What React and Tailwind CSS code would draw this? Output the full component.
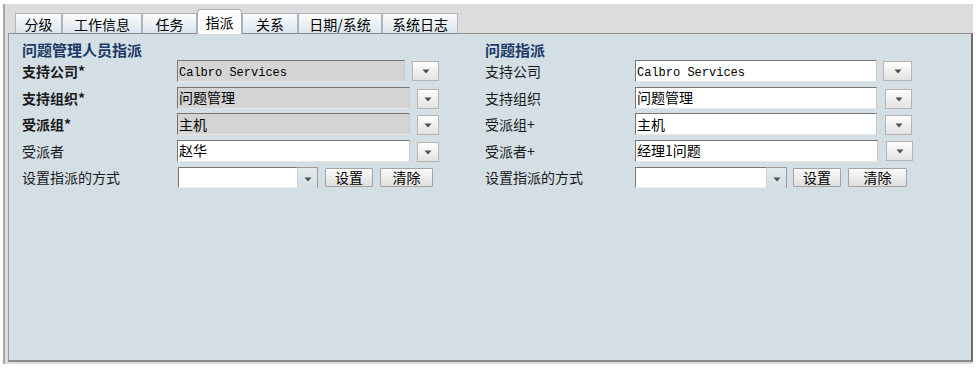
import React from "react";

function Tri() {
  return (
    <svg width="8" height="5" viewBox="0 0 8 5">
      <path d="M0.5 0.5H7.5L4 4.5Z" fill="#4d4d4d" />
    </svg>
  );
}

function DropBtn({ className }) {
  return (
    <div
      className={
        "flex items-end justify-center pb-[6px] border border-[#b4b4b4] bg-gradient-to-b from-[#fefefe] to-[#e2e2e2] " +
        className
      }
    >
      <Tri />
    </div>
  );
}

function Field({ className, gray, mono, children }) {
  return (
    <div
      className={
        "flex items-center pl-[1px] border border-t-[#767676] border-l-[#767676] border-r-[#c9c9c9] border-b-[#e6e6e6] text-black overflow-hidden whitespace-nowrap " +
        (gray ? "bg-[#d4d4d4] " : "bg-white ") +
        (mono
          ? "font-['Liberation_Mono',monospace] text-[12px] pt-[3px] "
          : "font-['Noto_Sans_CJK_SC',sans-serif] text-[14px] ") +
        className
      }
    >
      {children}
    </div>
  );
}

function Btn({ className, children }) {
  return (
    <div
      className={
        "flex items-center justify-center border border-[#a3a3a3] bg-gradient-to-b from-[#fbfbfb] to-[#dedede] text-[14px] text-black font-['Noto_Sans_CJK_SC',sans-serif] leading-none rounded-[1px] " +
        className
      }
    >
      {children}
    </div>
  );
}

function Select({ className }) {
  return (
    <div className={"flex h-[21px] " + className}>
      <div className="flex-1 bg-white border border-t-[#767676] border-l-[#767676] border-r-[#d0d0d0] border-b-[#ededed]" />
      <div className="w-[20px] flex items-end justify-center pb-[6px] border-t border-r border-t-[#9a9a9a] border-r-[#9a9a9a] bg-gradient-to-b from-[#e4eaee] to-[#d3dde3]">
        <Tri />
      </div>
    </div>
  );
}

function Label({ className, bold, children }) {
  return (
    <div
      className={
        "shrink-0 text-[14px] leading-none text-[#1a1a1a] font-['Noto_Sans_CJK_SC',sans-serif] whitespace-nowrap " +
        (bold ? "font-bold " : "") +
        className
      }
    >
      {children}
    </div>
  );
}

const tabs = [
  { t: "分级", w: "w-[47px]" },
  { t: "工作信息", w: "w-[80px]" },
  { t: "任务", w: "w-[55px]" },
  { t: "指派", w: "w-[45px]", active: true },
  { t: "关系", w: "w-[56px]" },
  { t: "日期/系统", w: "w-[84px]" },
  { t: "系统日志", w: "w-[76px]" },
];

export default function App() {
  return (
    <div className="w-[980px] h-[369px] bg-white pt-[4px] pl-[3px] overflow-hidden">
      <div className="w-[970px] h-[360px] bg-[#dcdcdc] border-l-2 border-[#a9a9a9] flex flex-col">
        {/* tab bar */}
        <div className="h-[29px] shrink-0 flex items-end pl-[10px]">
          {tabs.map((tb) =>
            tb.active ? (
              <div
                key={tb.t}
                className={
                  "h-[25px] -mb-[1px] relative z-10 flex items-center justify-center bg-white border border-b-0 border-[#a5b0bb] rounded-t-[4px] text-[14px] text-black font-['Noto_Sans_CJK_SC',sans-serif] leading-none " +
                  tb.w
                }
              >
                {tb.t}
              </div>
            ) : (
              <div
                key={tb.t}
                className={
                  "h-[20px] flex items-center justify-center bg-gradient-to-b from-[#fdfdfd] to-[#dae4ee] border border-b-0 border-[#a9b5c1] text-[14px] text-black font-['Noto_Sans_CJK_SC',sans-serif] leading-none " +
                  tb.w
                }
              >
                {tb.t}
              </div>
            )
          )}
        </div>
        {/* panel */}
        <div className="flex-1 ml-[3px] mb-[2px] bg-[#d3dee5] border border-t-[#8e8e8e] border-l-[#9c9c9c] border-r-2 border-r-[#6e6e6e] border-b-2 border-b-[#8a8a8a] pl-[13px] pt-[6px] flex">
          {/* left column */}
          <div className="w-[463px] shrink-0 flex flex-col">
            <div className="h-[18px] mb-[2px] flex items-center text-[15px] font-bold text-[#1d3b6a] font-['Noto_Sans_CJK_SC',sans-serif] leading-none">
              问题管理人员指派
            </div>
            <div className="flex flex-col gap-[4.5px]">
              <div className="flex items-center h-[22px]">
                <Label bold className="w-[155px]">支持公司*</Label>
                <Field gray mono className="w-[228px] h-[22px]">Calbro Services</Field>
                <DropBtn className="ml-[7px] w-[27px] h-[20px]" />
              </div>
              <div className="flex items-center h-[22px]">
                <Label bold className="w-[155px]">支持组织*</Label>
                <Field gray className="w-[233px] h-[22px]">问题管理</Field>
                <DropBtn className="ml-[7px] w-[22px] h-[20px] mt-[2px]" />
              </div>
              <div className="flex items-center h-[22px]">
                <Label bold className="w-[155px]">受派组*</Label>
                <Field gray className="w-[233px] h-[22px]">主机</Field>
                <DropBtn className="ml-[7px] w-[22px] h-[20px] mt-[2px]" />
              </div>
              <div className="flex items-center h-[22px]">
                <Label className="w-[155px]">受派者</Label>
                <Field className="w-[233px] h-[22px]">赵华</Field>
                <DropBtn className="ml-[7px] w-[22px] h-[20px] mt-[2px]" />
              </div>
              <div className="flex items-center h-[22px]">
                <Label className="w-[156px]">设置指派的方式</Label>
                <Select className="w-[140px]" />
                <Btn className="ml-[7px] w-[48px] h-[19px]">设置</Btn>
                <Btn className="ml-[7px] w-[53px] h-[19px]">清除</Btn>
              </div>
            </div>
          </div>
          {/* right column */}
          <div className="flex-1 flex flex-col">
            <div className="h-[18px] mb-[2px] flex items-center text-[15px] font-bold text-[#1d3b6a] font-['Noto_Sans_CJK_SC',sans-serif] leading-none">
              问题指派
            </div>
            <div className="flex flex-col gap-[4.5px]">
              <div className="flex items-center h-[22px]">
                <Label className="w-[150px]">支持公司</Label>
                <Field mono className="w-[242px] h-[22px]">Calbro Services</Field>
                <DropBtn className="ml-[6px] w-[29px] h-[20px]" />
              </div>
              <div className="flex items-center h-[22px]">
                <Label className="w-[150px]">支持组织</Label>
                <Field className="w-[242px] h-[22px]">问题管理</Field>
                <DropBtn className="ml-[8px] w-[27px] h-[20px] mt-[2px]" />
              </div>
              <div className="flex items-center h-[22px]">
                <Label className="w-[150px]">受派组+</Label>
                <Field className="w-[242px] h-[22px]">主机</Field>
                <DropBtn className="ml-[8px] w-[27px] h-[20px] mt-[2px]" />
              </div>
              <div className="flex items-center h-[22px]">
                <Label className="w-[150px]">受派者+</Label>
                <Field className="w-[243px] h-[22px]">经理1问题</Field>
                <DropBtn className="ml-[8px] w-[27px] h-[20px]" />
              </div>
              <div className="flex items-center h-[22px]">
                <Label className="w-[150px]">设置指派的方式</Label>
                <Select className="w-[152px]" />
                <Btn className="ml-[6px] w-[48px] h-[19px]">设置</Btn>
                <Btn className="ml-[7px] w-[59px] h-[19px]">清除</Btn>
              </div>
            </div>
          </div>
        </div>
      </div>
    </div>
  );
}
